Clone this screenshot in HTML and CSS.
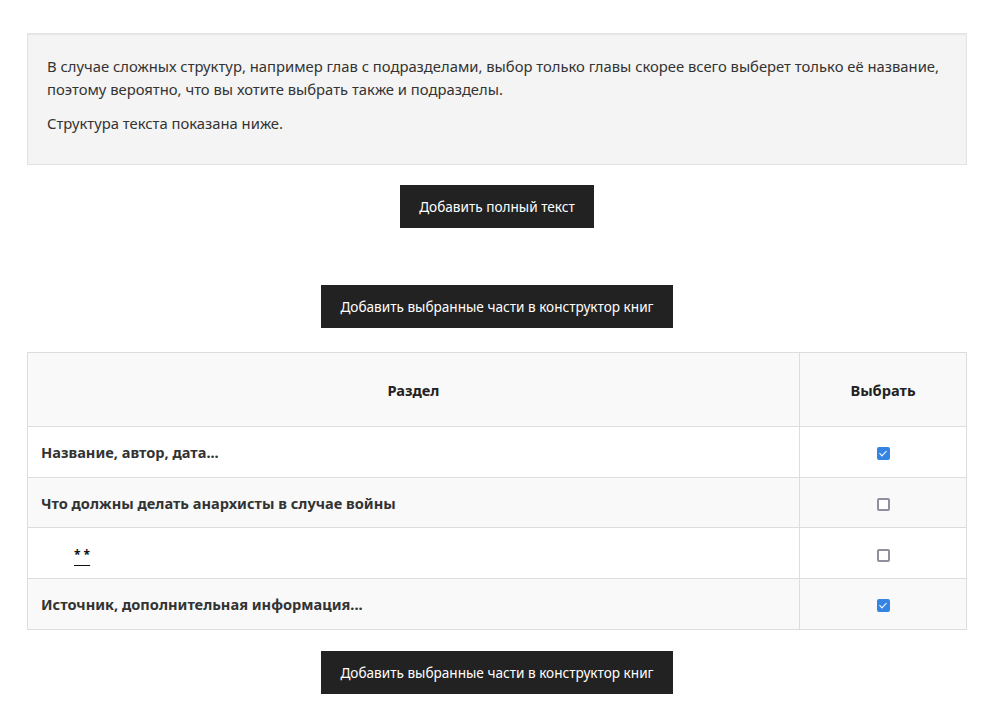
FILE: index.html
```html
<!DOCTYPE html>
<html lang="ru">
<head>
    <meta charset="UTF-8">
    <meta name="viewport" content="width=device-width, initial-scale=1.0">
    <title>Конструктор книг</title>
    <link rel="stylesheet" href="styles.css">
</head>
<body>
    <div class="container">
        <!-- Explanation -->
        <div class="well">
            <p>В случае сложных структур, например глав с подразделами, выбор только главы скорее всего выберет только её название, поэтому вероятно, что вы хотите выбрать также и подразделы.</p>
            <p>Структура текста показана ниже.</p>
        </div>

        <div class="actions">
            <button class="btn">Добавить полный текст</button>
        </div>

        <form class="bookbuilder-parts">
            <div class="actions actions-top">
                <button type="button" class="btn">Добавить выбранные части в конструктор книг</button>
            </div>

            <table class="parts-table">
                <thead>
                    <tr>
                        <th class="col-title">Раздел</th>
                        <th class="col-select">Выбрать</th>
                    </tr>
                </thead>
                <tbody>
                    <tr>
                        <td class="part-title">Название, автор, дата...</td>
                        <td class="part-select"><input type="checkbox" class="check" checked></td>
                    </tr>
                    <tr>
                        <td class="part-title">Что должны делать анархисты в случае войны</td>
                        <td class="part-select"><input type="checkbox" class="check"></td>
                    </tr>
                    <tr>
                        <td class="part-title level-2"><a href="#" class="part-link">* *</a></td>
                        <td class="part-select"><input type="checkbox" class="check"></td>
                    </tr>
                    <tr>
                        <td class="part-title">Источник, дополнительная информация...</td>
                        <td class="part-select"><input type="checkbox" class="check" checked></td>
                    </tr>
                </tbody>
            </table>

            <div class="actions">
                <button type="button" class="btn">Добавить выбранные части в конструктор книг</button>
            </div>
        </form>
    </div>
</body>
</html>
```
FILE: styles.css
```css
body {
    margin: 0;
    font-family: "Noto Sans", "Open Sans", Arial, sans-serif;
    font-size: 14.8px;
    color: #333;
    background: #fff;
}
.container {
    width: 940px;
    margin: 0 0 0 27px;
    padding-top: 33px;
}
.well {
    background: #f4f4f4;
    border: 1px solid #e3e3e3;
    box-shadow: inset 0 1px 2px rgba(0, 0, 0, 0.06);
    padding: 21px 19px 18px;
    margin-bottom: 20px;
}
.well p {
    margin: 0 0 11px;
    line-height: 23px;
}
.actions {
    display: flex;
    justify-content: center;
    margin-bottom: 22px;
}
.actions-top {
    margin-top: 57px;
    margin-bottom: 24px;
}
.btn {
    font-family: "Noto Sans", "Open Sans", Arial, sans-serif;
    font-size: 13.6px;
    color: #fff;
    background: #222;
    border: none;
    border-radius: 0;
    height: 43px;
    padding: 0 19px;
    cursor: pointer;
}
.btn:hover {
    background: #000;
}
.bookbuilder-parts {
    margin: 0;
}
.parts-table {
    width: 100%;
    border-collapse: collapse;
    border: 1px solid #ddd;
    margin-bottom: 21px;
}
.parts-table th,
.parts-table td {
    border: 1px solid #ddd;
}
.parts-table th {
    height: 71px;
    font-size: 14.6px;
    font-weight: bold;
    text-align: center;
    background: #f9f9f9;
    color: #222;
}
.parts-table td {
    height: 49.7px;
    padding: 0 13px;
}
.parts-table tbody tr:nth-child(even) td {
    background: #f9f9f9;
}
.col-select {
    width: 164px;
}
.part-title {
    font-size: 14.6px;
    font-weight: bold;
    color: #333;
}
.level-2 {
    padding-left: 46px !important;
}
.part-link {
    color: #111;
    font-size: 12px;
    text-decoration: underline;
    text-underline-offset: 6px;
}
.part-select {
    text-align: center;
}
.check {
    -webkit-appearance: none;
    appearance: none;
    position: relative;
    width: 13px;
    height: 13px;
    margin: 0;
    border: 2px solid #8f8f9d;
    border-radius: 2px;
    background: #fff;
    vertical-align: middle;
    cursor: pointer;
}
.check:checked {
    background: #3584e4;
    border-color: #3584e4;
}
.check:checked::after {
    content: "";
    position: absolute;
    left: 2.5px;
    top: 0;
    width: 3px;
    height: 6px;
    border: solid #fff;
    border-width: 0 1.8px 1.8px 0;
    transform: rotate(45deg);
}
```
